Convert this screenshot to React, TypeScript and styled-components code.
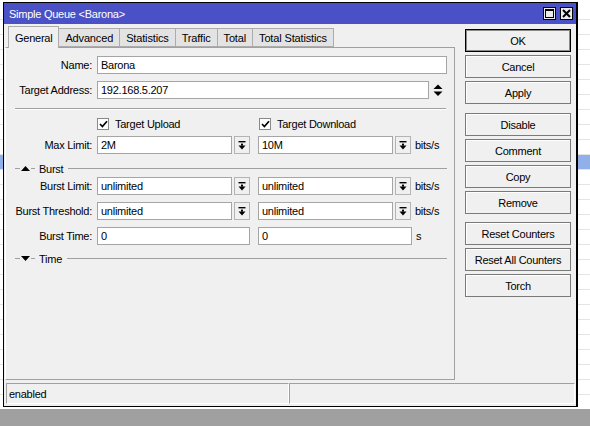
import React from 'react';
import styled, { createGlobalStyle } from 'styled-components';

const GlobalStyle = createGlobalStyle`
  html, body {
    margin: 0;
    padding: 0;
    width: 590px;
    height: 426px;
    overflow: hidden;
    background: #a0a0a0;
  }
  * { box-sizing: border-box; }
`;

const Screen = styled.div`
  width: 590px;
  height: 426px;
  display: flex;
  flex-direction: column;
  font-family: "Liberation Sans", Arial, sans-serif;
  font-size: 11px;
  letter-spacing: -0.25px;
  color: #000;
`;

const Workspace = styled.div`
  position: relative;
  height: 409px;
  background: #fff;
  padding-top: 5px;
  overflow: hidden;
`;

const ListRow = styled.div<{ $selected?: boolean }>`
  height: 15px;
  border-bottom: 1px solid #e4e4e4;
  background: ${p => (p.$selected ? '#8fb0e8' : '#fff')};
`;

const TaskStrip = styled.div`
  flex: 1;
  background: #a0a0a0;
`;

const Window = styled.div`
  position: absolute;
  left: 3px;
  top: 2px;
  width: 575px;
  border: 1px solid #000;
  border-right-width: 2px;
  background: #f0f0f0;
`;

const TitleBar = styled.div`
  height: 21px;
  background: #4a51c6;
  display: flex;
  align-items: center;
  justify-content: space-between;
  padding: 0 3px 0 5px;
  color: #fff;
`;

const TitleText = styled.span`
  font-size: 11px;
`;

const TitleButtons = styled.div`
  display: flex;
  gap: 4px;
`;

const TitleButton = styled.div`
  width: 13px;
  height: 13px;
  background: #ececec;
  border: 1px solid #000;
  display: flex;
  align-items: center;
  justify-content: center;
`;

const Body = styled.div`
  padding: 2px 1px 2px 1px;
  display: flex;
  flex-direction: column;
`;

const MainRow = styled.div`
  display: flex;
`;

const LeftColumn = styled.div`
  width: 450px;
  display: flex;
  flex-direction: column;
`;

const TabStrip = styled.div`
  height: 21px;
  display: flex;
  align-items: flex-end;
  padding-left: 3px;
`;

const Tab = styled.div<{ $active?: boolean }>`
  height: ${p => (p.$active ? '22px' : '19px')};
  margin-bottom: ${p => (p.$active ? '-1px' : '0')};
  padding: 0 6px;
  letter-spacing: ${p => (p.$active ? '-0.25px' : '-0.15px')};
  display: flex;
  align-items: center;
  background: ${p => (p.$active ? '#f0f0f0' : '#e3e3e3')};
  border: 1px solid #acacac;
  border-bottom: ${p => (p.$active ? 'none' : '1px solid #acacac')};
  border-left-width: ${p => (p.$active ? '1px' : '0')};
  position: relative;
  z-index: ${p => (p.$active ? 2 : 1)};
  &:nth-child(2) { border-left-width: 0; }
`;

const Panel = styled.div`
  height: 333px;
  border: 1px solid #a0a0a0;
  border-left-color: #fff;
  padding: 8px 7px 0 0;
  display: flex;
  flex-direction: column;
`;

const FieldRow = styled.div<{ $gap?: number }>`
  height: 18px;
  margin-top: ${p => p.$gap ?? 0}px;
  display: flex;
  align-items: center;
`;

const Label = styled.div`
  width: 86px;
  margin-right: 5px;
  text-align: right;
  white-space: nowrap;
`;

const TextBox = styled.div<{ $width?: number }>`
  height: 18px;
  ${p => (p.$width ? `width: ${p.$width}px;` : 'flex: 1;')}
  background: #fff;
  border: 1px solid #a5a5a5;
  padding-left: 3px;
  display: flex;
  align-items: center;
  & + & { margin-left: 8px; }
`;

const SpinBox = styled.div`
  width: 18px;
  height: 18px;
  display: flex;
  align-items: center;
  justify-content: center;
`;

const Combo = styled.div`
  display: flex;
  gap: 2px;
  & + & { margin-left: 8px; }
`;

const DropButton = styled.div`
  width: 16px;
  height: 18px;
  background: #f0f0f0;
  border: 1px solid #b4b4b4;
  display: flex;
  align-items: center;
  justify-content: center;
`;

const Unit = styled.span`
  margin-left: 4px;
`;

const Separator = styled.div<{ $gap: number }>`
  height: 1px;
  margin: ${p => p.$gap}px 1px 0 9px;
  background: #a0a0a0;
  border-bottom: 1px solid #fff;
  box-sizing: content-box;
`;

const CheckRow = styled.div`
  height: 13px;
  margin-top: 7px;
  margin-left: 91px;
  display: flex;
  align-items: center;
`;

const CheckItem = styled.label`
  width: 162px;
  display: flex;
  align-items: center;
  gap: 6px;
`;

const CheckBox = styled.span`
  width: 12px;
  height: 12px;
  background: #fff;
  border: 1px solid #8a8a8a;
  display: flex;
  align-items: center;
  justify-content: center;
`;

const SectionHeader = styled.div<{ $gap: number }>`
  height: 11px;
  margin-top: ${p => p.$gap}px;
  margin-left: 9px;
  display: flex;
  align-items: center;
`;

const Rule = styled.span<{ $width?: number }>`
  height: 1px;
  background: #a0a0a0;
  ${p => (p.$width ? `width: ${p.$width}px;` : 'flex: 1; margin-left: 5px;')}
`;

const SectionTitle = styled.span`
  margin-left: 4px;
`;

const ButtonColumn = styled.div`
  width: 106px;
  margin: 3px 0 0 10px;
  display: flex;
  flex-direction: column;
`;

const ButtonGroup = styled.div<{ $gap?: number }>`
  display: flex;
  flex-direction: column;
  gap: 3px;
  margin-top: ${p => p.$gap ?? 0}px;
`;

const ActionButton = styled.div<{ $default?: boolean }>`
  height: 23px;
  display: flex;
  align-items: center;
  justify-content: center;
  background: #f0f0f0;
  border: 1px solid ${p => (p.$default ? '#000' : '#7a7a7a')};
  box-shadow: ${p => (p.$default ? 'inset 0 0 0 1px #8a8a8a' : 'inset 1px 1px 0 #fff')};
  font-size: 11px;
`;

const StatusBar = styled.div`
  height: 21px;
  margin: 3px 0 0 1px;
  display: flex;
`;

const StatusCell = styled.div<{ $width?: number }>`
  ${p => (p.$width ? `width: ${p.$width}px;` : 'flex: 1;')}
  border-top: 1px solid #a0a0a0;
  border-left: 1px solid #a0a0a0;
  border-bottom: 1px solid #fff;
  border-right: 1px solid #fff;
  padding-left: 2px;
  display: flex;
  align-items: center;
`;

const DropIcon = () => (
  <svg width="8" height="9" viewBox="0 0 8 9">
    <rect x="0.5" y="0" width="7" height="1.4" fill="#000" />
    <rect x="3" y="2.6" width="2" height="2" fill="#000" />
    <polygon points="0.5,4.5 7.5,4.5 4,8.5" fill="#000" />
  </svg>
);

const SpinIcon = () => (
  <svg width="10" height="13" viewBox="0 0 10 13">
    <polygon points="0.5,5 9.5,5 5,0.5" fill="#000" />
    <polygon points="0.5,7.5 9.5,7.5 5,12" fill="#000" />
  </svg>
);

const CheckMark = () => (
  <svg width="9" height="8" viewBox="0 0 9 8">
    <path d="M1 4 L3.4 6.5 L8 1.2" stroke="#000" strokeWidth="1.7" fill="none" />
  </svg>
);

const Triangle = ({ up }: { up?: boolean }) => (
  <svg width="9" height="5" viewBox="0 0 9 5" style={{ margin: '0 1px' }}>
    <polygon points={up ? '0,5 9,5 4.5,0' : '0,0 9,0 4.5,5'} fill="#000" />
  </svg>
);

const MaxIcon = () => (
  <svg width="9" height="9" viewBox="0 0 9 9">
    <rect x="0.5" y="0.5" width="8" height="8" fill="none" stroke="#000" />
    <rect x="0" y="0" width="9" height="2" fill="#000" />
  </svg>
);

const CloseIcon = () => (
  <svg width="9" height="9" viewBox="0 0 9 9">
    <path d="M1 1 L8 8 M8 1 L1 8" stroke="#000" strokeWidth="2" />
  </svg>
);

const tabs = ['General', 'Advanced', 'Statistics', 'Traffic', 'Total', 'Total Statistics'];

const ComboField = ({ value }: { value: string }) => (
  <Combo>
    <TextBox $width={135}>{value}</TextBox>
    <DropButton><DropIcon /></DropButton>
  </Combo>
);

export default function App() {
  return (
    <>
      <GlobalStyle />
      <Screen>
        <Workspace>
          {Array.from({ length: 27 }).map((_, i) => (
            <ListRow key={i} $selected={i === 10} />
          ))}
          <Window>
            <TitleBar>
              <TitleText>Simple Queue &lt;Barona&gt;</TitleText>
              <TitleButtons>
                <TitleButton><MaxIcon /></TitleButton>
                <TitleButton><CloseIcon /></TitleButton>
              </TitleButtons>
            </TitleBar>
            <Body>
              <MainRow>
                <LeftColumn>
                  <TabStrip>
                    {tabs.map((t, i) => (
                      <Tab key={t} $active={i === 0}>{t}</Tab>
                    ))}
                  </TabStrip>
                  <Panel>
                    <FieldRow>
                      <Label>Name:</Label>
                      <TextBox>Barona</TextBox>
                    </FieldRow>
                    <FieldRow $gap={7}>
                      <Label>Target Address:</Label>
                      <TextBox>192.168.5.207</TextBox>
                      <SpinBox><SpinIcon /></SpinBox>
                    </FieldRow>
                    <Separator $gap={9} />
                    <CheckRow>
                      <CheckItem><CheckBox><CheckMark /></CheckBox>Target Upload</CheckItem>
                      <CheckItem><CheckBox><CheckMark /></CheckBox>Target Download</CheckItem>
                    </CheckRow>
                    <FieldRow $gap={6}>
                      <Label>Max Limit:</Label>
                      <ComboField value="2M" />
                      <ComboField value="10M" />
                      <Unit>bits/s</Unit>
                    </FieldRow>
                    <SectionHeader $gap={9}>
                      <Rule $width={5} />
                      <Triangle up />
                      <Rule $width={4} />
                      <SectionTitle>Burst</SectionTitle>
                      <Rule />
                    </SectionHeader>
                    <FieldRow $gap={3}>
                      <Label>Burst Limit:</Label>
                      <ComboField value="unlimited" />
                      <ComboField value="unlimited" />
                      <Unit>bits/s</Unit>
                    </FieldRow>
                    <FieldRow $gap={7}>
                      <Label>Burst Threshold:</Label>
                      <ComboField value="unlimited" />
                      <ComboField value="unlimited" />
                      <Unit>bits/s</Unit>
                    </FieldRow>
                    <FieldRow $gap={7}>
                      <Label>Burst Time:</Label>
                      <TextBox $width={153}>0</TextBox>
                      <TextBox $width={154}>0</TextBox>
                      <Unit>s</Unit>
                    </FieldRow>
                    <SectionHeader $gap={8}>
                      <Rule $width={5} />
                      <Triangle />
                      <Rule $width={4} />
                      <SectionTitle>Time</SectionTitle>
                      <Rule />
                    </SectionHeader>
                  </Panel>
                </LeftColumn>
                <ButtonColumn>
                  <ButtonGroup>
                    <ActionButton $default>OK</ActionButton>
                    <ActionButton>Cancel</ActionButton>
                    <ActionButton>Apply</ActionButton>
                  </ButtonGroup>
                  <ButtonGroup $gap={9}>
                    <ActionButton>Disable</ActionButton>
                    <ActionButton>Comment</ActionButton>
                    <ActionButton>Copy</ActionButton>
                    <ActionButton>Remove</ActionButton>
                  </ButtonGroup>
                  <ButtonGroup $gap={8}>
                    <ActionButton>Reset Counters</ActionButton>
                    <ActionButton>Reset All Counters</ActionButton>
                    <ActionButton>Torch</ActionButton>
                  </ButtonGroup>
                </ButtonColumn>
              </MainRow>
              <StatusBar>
                <StatusCell $width={283}>enabled</StatusCell>
                <StatusCell />
              </StatusBar>
            </Body>
          </Window>
        </Workspace>
        <TaskStrip />
      </Screen>
    </>
  );
}
